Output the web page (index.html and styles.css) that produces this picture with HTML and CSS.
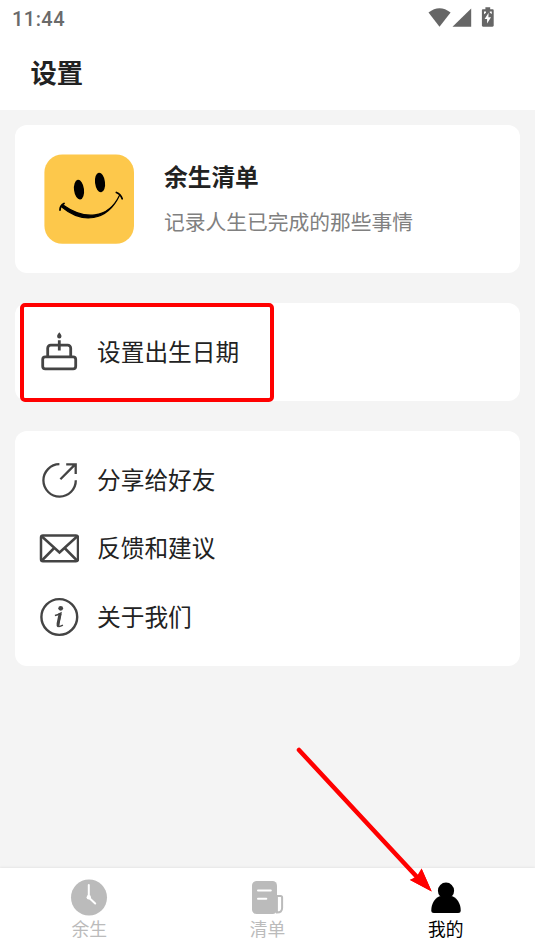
FILE: index.html
```html
<!DOCTYPE html>
<html lang="zh-CN">
<head>
<meta charset="utf-8">
<title>设置</title>
<link rel="stylesheet" href="styles.css">
</head>
<body>
<div class="screen">
  <div class="statusbar">
    <span class="time">11:44</span>
    <svg class="status-icons" width="70" height="30" viewBox="0 0 70 30" fill="#666">
      <path d="M3.500 12.600Q14.500 3.800 25.600 12.600L14.500 26.800z"/>
      <path d="M46.200 8.400v18.400H27.500z"/>
      <path fill-rule="evenodd" d="M58 9.300h2.400V7.300h4.800v2h2.400c.6 0 1.100.5 1.100 1.100v15.200c0 .7-.5 1.200-1.200 1.200h-9.400c-.7 0-1.200-.5-1.200-1.200V10.400c0-.6.500-1.100 1.100-1.100zm5.600 3.500-4 6.100h2.500v4.700l3.900-6.300h-2.600z"/>
      <path d="M59 11.600h2v1.200l-2 1.500zM64.800 11.600h2v2.400l-2-1.200z" fill="#fff"/>
    </svg>
  </div>
  <header class="header"><h1>设置</h1></header>
  <main class="content">
    <section class="card profile">
      <svg class="avatar" width="90" height="90" viewBox="0 0 90 90">
        <rect x=".4" y=".4" width="89.600" height="89.400" rx="18" fill="#fdc84b"/>
        <ellipse cx="35" cy="35.700" rx="5" ry="9.900" transform="rotate(-7 35 35.700)"/>
        <ellipse cx="56" cy="28.500" rx="5" ry="9.900" transform="rotate(-7 56 28.500)"/>
        <path d="M17.500 52.800C38 70 63 68 75.700 41C64 65.800 40 66 19 51z" stroke="#000" stroke-width="1.200"/>
        <path d="M16 56C16 53.500 17.200 51 20 49.500M72.400 38.500C75.100 39.500 77.100 41.500 78.200 44.700" fill="none" stroke="#000" stroke-width="1.800" stroke-linecap="round"/>
      </svg>
      <div class="profile-text">
        <h2>余生清单</h2>
        <p>记录人生已完成的那些事情</p>
      </div>
    </section>
    <section class="card birth">
      <div class="row">
        <svg class="icon" width="40" height="40" viewBox="0 0 40 40" fill="none" stroke="#444" stroke-width="2.800">
          <rect x="3.700" y="24.900" width="33" height="12" rx="2.600"/>
          <path d="M8.700 24.500V16.200a3 3 0 0 1 3-3h17a3 3 0 0 1 3 3v8.300M20.300 8.200v10.300"/>
          <path d="M20.300.3c1 1.400 2.200 2.600 2.200 4a2.200 2.200 0 0 1-4.400 0c0-1.400 1.200-2.600 2.200-4z" fill="#444" stroke="none"/>
        </svg>
        <span>设置出生日期</span>
      </div>
      <div class="highlight"></div>
    </section>
    <section class="card list">
      <div class="row">
        <svg class="icon" width="40" height="40" viewBox="0 0 40 40" fill="none" stroke="#444" stroke-width="2.300">
          <path d="M20.400 4.200A16.200 16.200 0 1 0 36.800 20.300M21.400 19.200 36.200 4.400M27.200 4.300h9.500v9.700"/>
        </svg>
        <span>分享给好友</span>
      </div>
      <div class="row">
        <svg class="icon" width="40" height="40" viewBox="0 0 40 40" fill="none" stroke="#444" stroke-width="2.500">
          <rect x="2" y="7.600" width="37" height="25.600" rx="2"/>
          <path d="M2.900 8.500 20.500 24.500 38 8.500M2.900 32.500 15.200 20M38 32.500 25.600 20"/>
        </svg>
        <span>反馈和建议</span>
      </div>
      <div class="row">
        <svg class="icon" width="40" height="40" viewBox="0 0 40 40" fill="none" stroke="#444">
          <circle cx="20.300" cy="20" r="17.900" stroke-width="2.400"/>
          <circle cx="21.700" cy="11.300" r="2.400" fill="#444" stroke="none"/>
          <path d="M15.900 18.500c1.800-.2 4-1.100 5.800-2.200l-2.300 10.800c-.5 2.400-.1 3.400 4.500 1" stroke-width="1.600"/>
          <path d="M21.200 16.400 19.100 26.500c-.2 1.100-.1 2.100.6 2.800" stroke-width="3"/>
        </svg>
        <span>关于我们</span>
      </div>
    </section>
  </main>
  <nav class="tabbar">
    <div class="tab">
      <svg width="38" height="38" viewBox="0 0 38 38">
        <circle cx="19" cy="18.500" r="18" fill="#bbb"/>
        <path d="M18.800 6v12.500l6.400 6" fill="none" stroke="#fff" stroke-width="2" stroke-linecap="round"/>
        <circle cx="18.800" cy="18.200" r="2.200" fill="#fff"/>
      </svg>
      <span>余生</span>
    </div>
    <div class="tab">
      <svg width="38" height="38" viewBox="0 0 38 38">
        <path d="M28.900 17h3.700a1.500 1.500 0 0 1 1.500 1.500V29c0 3-1.900 4.500-5.200 4.500z" fill="#fff" stroke="#bbb" stroke-width="2"/>
        <rect x="4" y="2" width="25" height="33" rx="4.500" fill="#bbb"/>
        <path d="M10 11.500h12.800M10 19.700h8.300" stroke="#fff" stroke-width="2" stroke-linecap="round"/>
      </svg>
      <span>清单</span>
    </div>
    <div class="tab active">
      <svg width="38" height="38" viewBox="0 0 38 38">
        <circle cx="19" cy="11.700" r="8.100"/>
        <path d="M12.500 17.200C7.500 19.400 4.300 24.900 4.300 31.400c0 1.700.9 2.500 2.500 2.500h24.400c1.600 0 2.500-.8 2.500-2.500 0-6.500-3.200-12-8.200-14.200z"/>
      </svg>
      <span>我的</span>
    </div>
  </nav>
  <svg class="arrow" width="140" height="150" viewBox="0 0 140 150">
    <path d="M4 5 122 132" stroke="#f00" stroke-width="4.500" stroke-linecap="round"/>
    <path d="M136.700 146.500 115 135 122 131 126.500 123.500z" fill="#f00"/>
    <path d="M136.700 146.500 114.700 134.800 120.500 133.500 124.500 130 126.600 123.500z" fill="#f00"/>
  </svg>
</div>
</body>
</html>
```
FILE: styles.css
```css
* {
  box-sizing: border-box;
}
body, h1, h2, p {
  margin: 0;
}
body {
  font-family: "Noto Sans CJK SC", sans-serif;
  color: #222;
}
svg {
  display: block;
  flex: none;
}
.screen {
  position: relative;
  display: flex;
  flex-direction: column;
  height: 951px;
  overflow: hidden;
  background: #f4f4f4;
}
.statusbar {
  display: flex;
  justify-content: space-between;
  height: 37px;
  padding: 0 40px 0 12px;
  background: #fff;
}
.time {
  font: 500 20px/38px Roboto, sans-serif;
  letter-spacing: .45px;
  color: #6a6a6a;
}
.header {
  height: 73px;
  padding-left: 30.5px;
  background: #fff;
}
.header h1 {
  font-size: 26.3px;
  line-height: 70px;
  font-weight: 700;
}
.content {
  flex: 1;
  display: flex;
  flex-direction: column;
  gap: 30px;
  padding: 15px 15px 0;
}
.card {
  position: relative;
  border-radius: 12px;
  background: #fff;
}
.profile {
  display: flex;
  height: 148px;
  padding: 29px 0 0 29px;
}
.profile-text {
  margin-left: 30px;
}
.profile h2 {
  font-size: 23.7px;
  line-height: 36px;
  margin-top: 4px;
}
.profile p {
  font-size: 20.75px;
  line-height: 32px;
  margin-top: 11px;
  font-weight: 400;
  color: #808080;
}
.birth {
  height: 98px;
  padding-top: 14.5px;
}
.list {
  height: 235px;
  padding-top: 14.5px;
}
.row {
  display: flex;
  align-items: center;
  height: 68.5px;
  padding-left: 24px;
  font-size: 23.7px;
}
.row span {
  margin: -2px 0 0 18px;
}
.highlight {
  position: absolute;
  left: 5px;
  top: 0;
  width: 254px;
  height: 99px;
  border: 4px solid #f00;
  border-radius: 5px;
}
.tabbar {
  display: flex;
  height: 83px;
  padding-top: 11px;
  background: #fff;
  box-shadow: 0 -1px 2px rgba(0, 0, 0, .06);
}
.tab {
  flex: 1;
  display: flex;
  flex-direction: column;
  align-items: center;
  color: #bbb;
  font-size: 17.8px;
  line-height: 23px;
}
.active {
  color: #000;
}
.arrow {
  position: absolute;
  left: 295px;
  top: 745px;
}
```
